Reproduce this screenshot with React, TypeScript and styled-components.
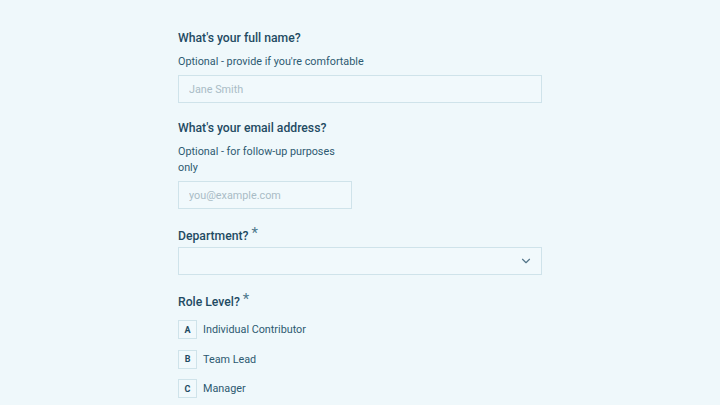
import React from "react";
import styled, { createGlobalStyle } from "styled-components";

const Global = createGlobalStyle`
  html, body { margin: 0; padding: 0; background: #eff8fb; }
  body { font-family: Roboto, "Liberation Sans", sans-serif; -webkit-font-smoothing: antialiased; }
  * { box-sizing: border-box; }
`;

const Page = styled.div`
  width: 720px;
  height: 405px;
  overflow: hidden;
  background: #eff8fb;
  display: flex;
  justify-content: flex-start;
  padding: 28px 0 0 178px;
`;

const Form = styled.div`
  width: 364px;
  display: flex;
  flex-direction: column;
`;

const Field = styled.div<{ $mt?: number }>`
  display: flex;
  flex-direction: column;
  margin-bottom: 15px;
  margin-top: ${(p) => p.$mt ?? 0}px;
`;

const Question = styled.div<{ $tight?: boolean }>`
  font-size: 12.2px;
  line-height: 20px;
  font-weight: 500;
  color: #1f4b63;
  margin-bottom: ${(p) => (p.$tight ? "1px" : "6px")};
  display: flex;
  align-items: flex-start;
`;

const Star = styled.span`
  font-size: 15px;
  line-height: 14px;
  font-weight: 400;
  color: #4f7a8e;
  margin-left: 3px;
`;

const Desc = styled.div<{ $max?: number }>`
  font-size: 10.8px;
  line-height: 16px;
  color: #2d5a71;
  margin-bottom: 5px;
  max-width: ${(p) => (p.$max ? `${p.$max}px` : "none")};
`;

const Input = styled.input<{ $w?: number }>`
  width: ${(p) => (p.$w ? `${p.$w}px` : "100%")};
  height: 28px;
  border: 1px solid #cfe3ea;
  background: #f1f9fc;
  padding: 0 10px;
  font-family: Roboto, "Liberation Sans", sans-serif;
  font-size: 10.8px;
  color: #1f4b63;
  outline: none;
  &::placeholder { color: #a9bcc6; }
`;

const Select = styled.div`
  width: 100%;
  height: 28px;
  border: 1px solid #cfe3ea;
  background: #f1f9fc;
  display: flex;
  align-items: center;
  justify-content: flex-end;
  padding-right: 8px;
`;

const Options = styled.div`
  display: flex;
  flex-direction: column;
  gap: 10.5px;
  margin-top: 7px;
`;

const Option = styled.div`
  display: flex;
  align-items: center;
  gap: 6px;
  height: 19px;
`;

const Key = styled.span`
  width: 19px;
  height: 19px;
  border: 1px solid #cfe3ea;
  background: #f1f9fc;
  display: flex;
  align-items: center;
  justify-content: center;
  font-size: 9px;
  font-weight: 700;
  color: #1f4b63;
`;

const OptLabel = styled.span`
  font-size: 10.8px;
  color: #2d5a71;
`;

const Chevron = () => (
  <svg width="14" height="14" viewBox="0 0 24 24" fill="none" stroke="#54768a" strokeWidth="2" strokeLinecap="round" strokeLinejoin="round">
    <path d="m6 9 6 6 6-6" />
  </svg>
);

export default function App() {
  return (
    <>
      <Global />
      <Page>
        <Form>
          <Field>
            <Question>What's your full name?</Question>
            <Desc>Optional - provide if you're comfortable</Desc>
            <Input placeholder="Jane Smith" />
          </Field>
          <Field>
            <Question>What's your email address?</Question>
            <Desc $max={174}>Optional - for follow-up purposes only</Desc>
            <Input $w={174} placeholder="you@example.com" />
          </Field>
          <Field $mt={2}>
            <Question $tight>
              Department?<Star>*</Star>
            </Question>
            <Select>
              <Chevron />
            </Select>
          </Field>
          <Field $mt={2}>
            <Question $tight>
              Role Level?<Star>*</Star>
            </Question>
            <Options>
              {[
                ["A", "Individual Contributor"],
                ["B", "Team Lead"],
                ["C", "Manager"],
              ].map(([k, l]) => (
                <Option key={k}>
                  <Key>{k}</Key>
                  <OptLabel>{l}</OptLabel>
                </Option>
              ))}
            </Options>
          </Field>
        </Form>
      </Page>
    </>
  );
}
